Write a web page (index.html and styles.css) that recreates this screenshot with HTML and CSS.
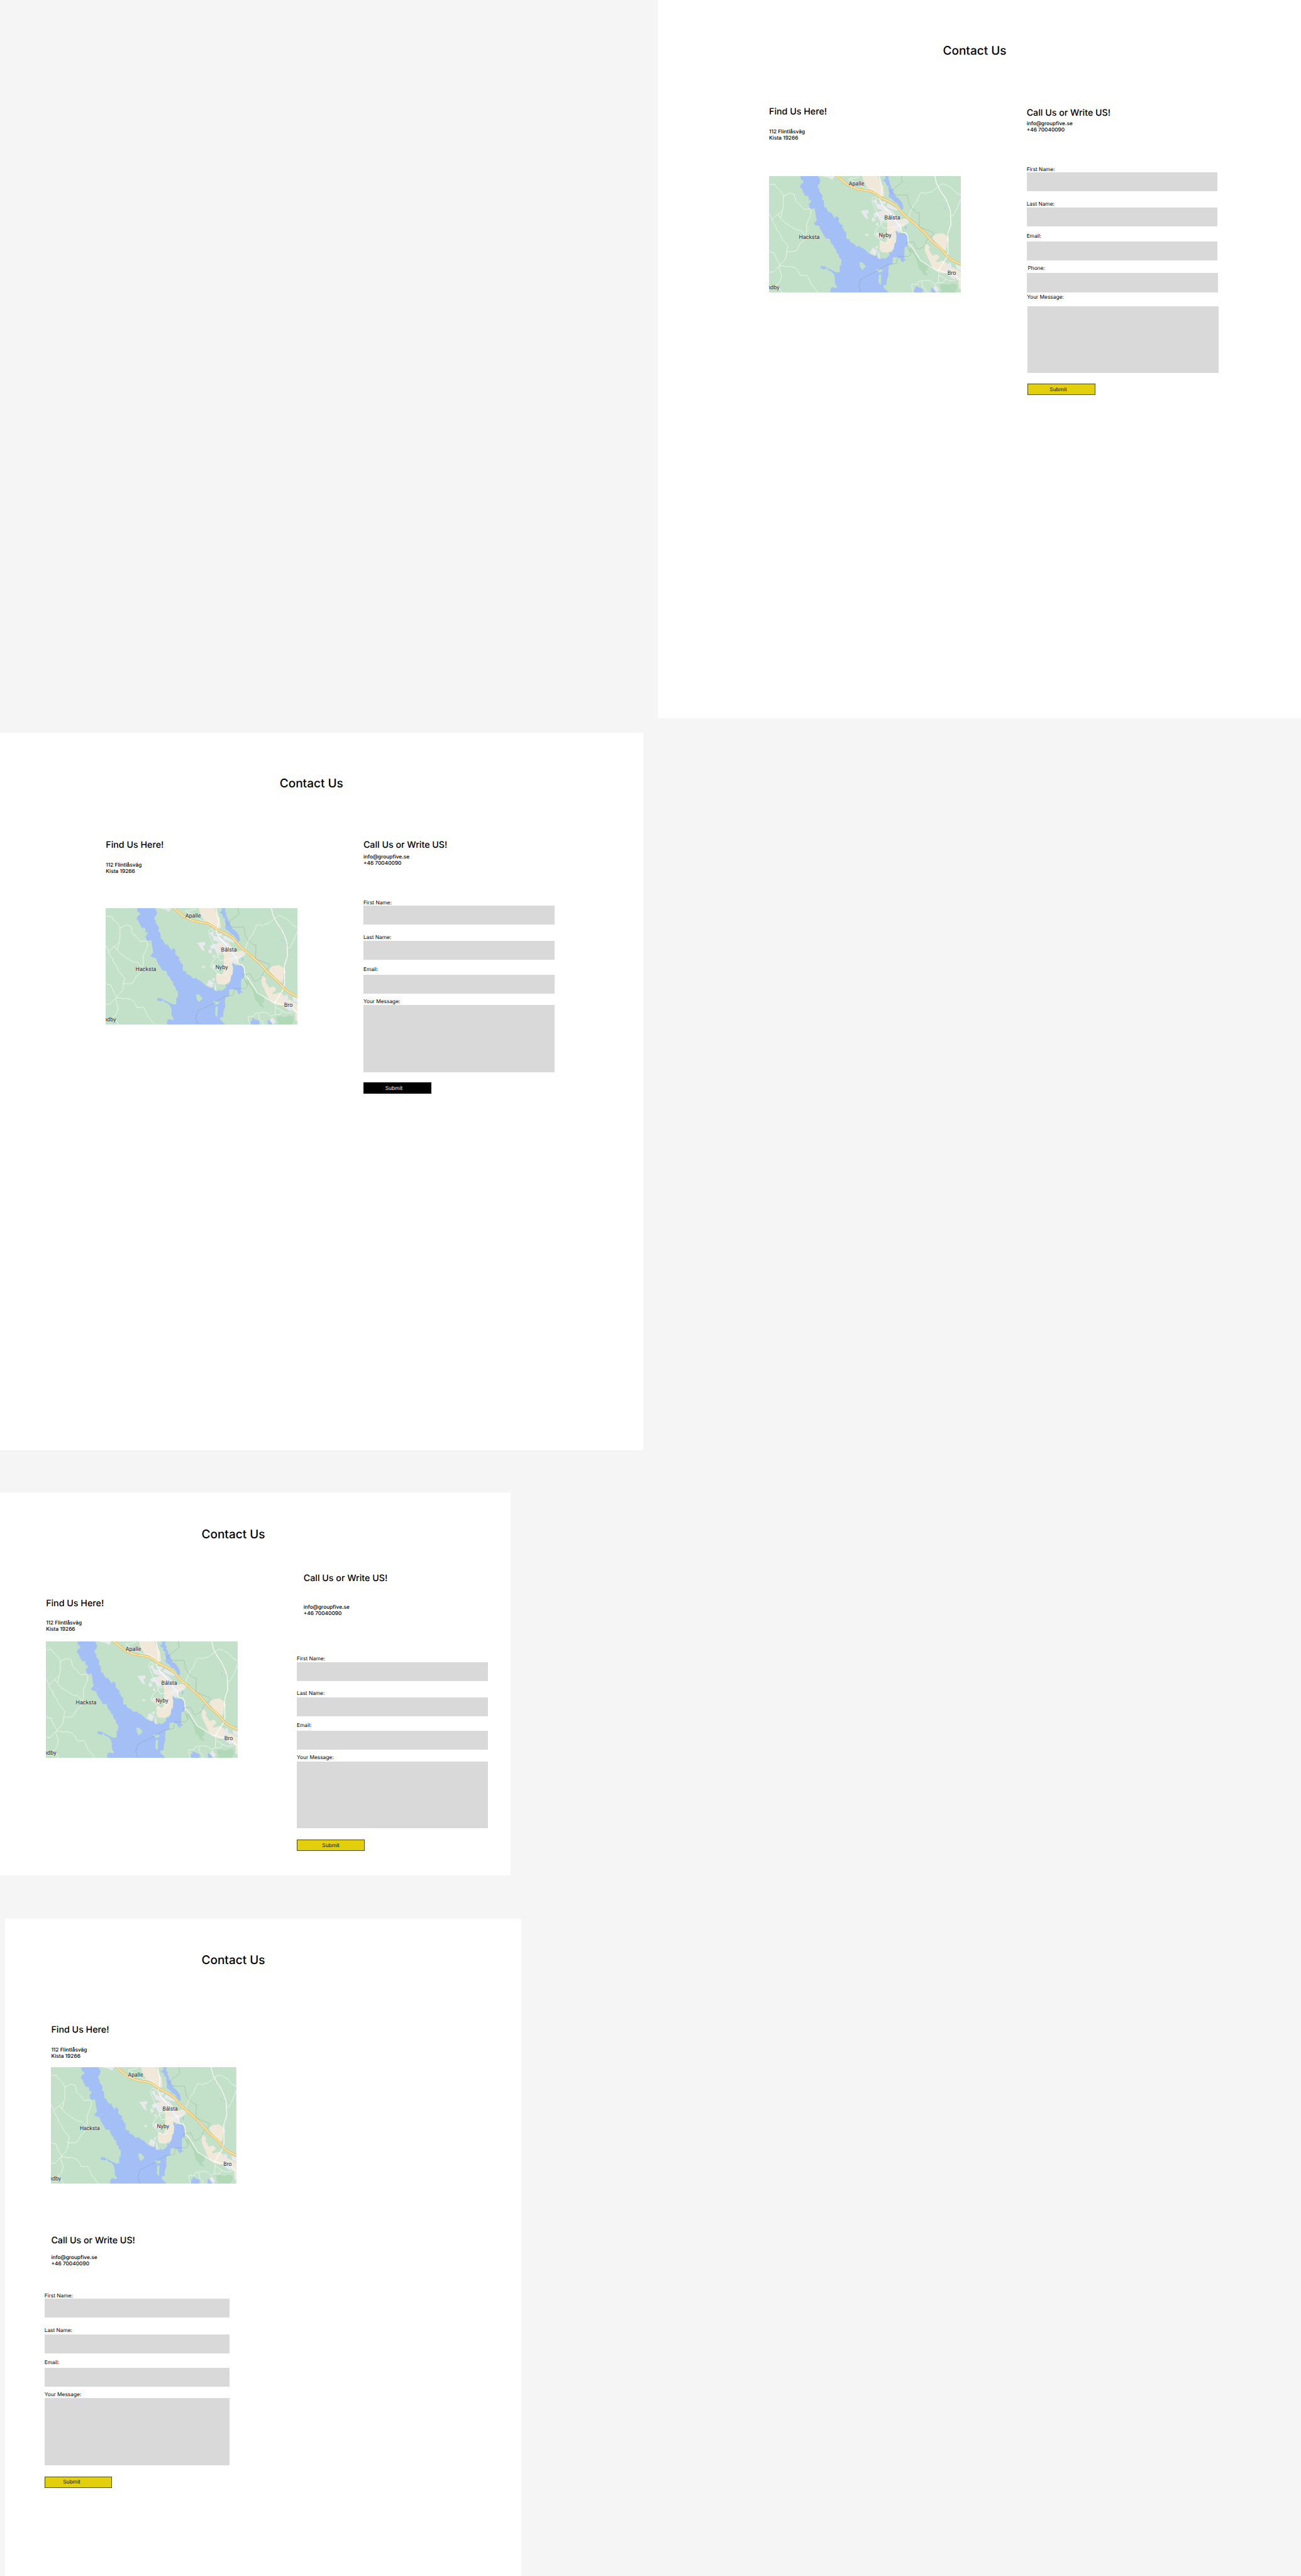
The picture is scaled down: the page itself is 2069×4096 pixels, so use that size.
FILE: index.html
```html
<!DOCTYPE html>
<html lang="en">
<head>
<meta charset="utf-8">
<title>Contact Us</title>
<link rel="stylesheet" href="styles.css">
</head>
<body>
<svg class="defs" aria-hidden="true">
  <symbol id="terrain" viewBox="49 31 1490 935" preserveAspectRatio="none">
    <rect class="land" x="49" y="31" width="1490" height="935"/>
    <path class="forest" d="M1135 612L1165 600 1180 645 1215 690 1250 720 1283 745 1280 785 1262 795 1285 828 1245 820 1238 795 1212 770 1195 700 1170 655 1140 635ZM1400 895L1440 905 1480 892 1512 905 1508 940 1490 966 1370 966 1395 950 1380 930 1378 900Z"/>
    <path class="urban" d="M773 31L893 31 915 80 935 110 944 188 915 200 880 190 868 155 815 125 785 85ZM918 308L1000 305 1035 350 1065 380 1110 370 1130 385 1125 405 1080 445 1060 480 1035 470 1040 510 1036 560 1022 590 1015 620 975 645 920 640 908 615 908 560 925 548 950 570 965 540 968 400 940 350 920 330ZM1325 510L1350 495 1400 487 1430 510 1450 543 1432 560 1430 600 1418 630 1385 610 1322 535ZM1258 580L1275 575 1297 600 1290 620 1320 670 1350 658 1373 675 1368 695 1345 710 1350 722 1400 708 1432 730 1436 765 1480 765 1539 800 1539 938 1524 930 1520 865 1440 810 1380 808 1340 785 1310 750 1285 690 1262 640Z"/>
    <path class="built" d="M455 31L556 31 542 60 510 42ZM855 230L883 214 888 250 935 262 1010 320 1012 350 1075 408 1072 480 1040 470 1020 420 985 350 935 305 885 290 882 265ZM895 235L955 233 950 262ZM960 258L982 250 1025 305 965 280ZM990 260L1055 300 1035 308 1000 280ZM760 310L820 302 823 328 805 332 822 375 800 370ZM858 335L885 320 918 315 945 370 948 392 920 395 895 350 872 365ZM846 372L860 358 878 385 855 398ZM875 418L897 402 898 432ZM793 508L808 490 828 510ZM873 502L888 478 935 505 925 537ZM833 645L855 605 890 630 872 668ZM870 605L897 587 890 618ZM896 622L908 660 906 697 896 695ZM1090 400L1120 378 1125 400 1085 420ZM1435 735L1460 725 1468 760 1450 795 1520 835 1485 858 1432 820ZM1500 740L1539 755 1539 790 1505 775ZM1342 904L1370 940 1350 966 1325 928Z"/>
    <path class="water" d="M292 31L298 60 316 70 314 88 300 92 288 118 302 130 312 155 330 190 355 190 358 225 376 220 374 238 358 258 366 285 380 298 388 290 404 290 410 330 412 350 420 385 397 413 410 425 440 432 446 455 455 472 473 500 490 530 522 535 530 570 550 590 555 610 570 618 576 650 590 660 597 690 611 700 609 748 598 750 598 803 570 803 520 778 480 755 452 752 450 772 480 779 497 768 510 788 535 797 555 822 560 845 562 890 578 920 572 930 545 920 528 930 524 966H980L960 945 938 925 940 905 962 905 965 860 978 820 975 790 980 745 1008 738 1010 685 1045 680 1070 695 1072 708 1090 725 1096 710 1117 706 1100 695 1102 602 1118 595 1127 565 1122 510 1105 492 1050 488 1045 475 1031 473 1040 510 1036 560 1024 575 1020 610 1013 625 1000 645 980 640 985 665 965 685 940 697 932 680 925 693 908 697 890 685 890 670 865 672 830 655 790 617 765 605 755 592 728 597 710 575 678 560 675 538 650 535 648 480 630 470 630 450 616 452 624 430 590 400 592 368 572 350 560 370 545 345 526 318 520 328 498 300 496 285 478 280 474 225 460 222 464 185 440 155 438 125 426 122 430 100 442 90 448 62 430 31ZM752 722L775 725 802 755 772 785 755 755ZM880 780L930 780 930 795 905 805ZM903 822L920 820 918 905 900 885ZM450 407H465V411H450Z" fill-rule="evenodd"/>
    <path class="water" d="M950 31L955 50 932 66 955 80 962 105 980 115 973 130 982 160 978 195 1010 220 1025 240 1045 248 1080 303 1093 290 1085 250 1065 220 1050 205 1035 198 1030 182 1015 170 1017 140 1000 135 998 110 985 90 988 70 975 60 978 31ZM1106 432H1117V450L1108 458ZM1173 966L1175 938 1186 935 1190 912 1215 925 1243 935V966ZM1308 925L1325 935 1350 966H1308ZM1412 283H1422V292H1414ZM1435 293L1448 310 1440 306Z"/>
    <path class="road" d="M49 97L97 97 103 118 125 135 160 180 161 215 160 275 140 366M161 192L208 167 245 177 257 233 290 262 317 299 368 293 376 307 370 350 342 412 341 480 325 520 320 550 287 578 265 625 243 637 186 638M152 307L72 378 49 328M118 337L140 370 180 410 262 462 302 470 325 505M72 378L78 400 104 440 108 460 130 488 150 535 198 595 187 630 183 682 165 712 134 742 105 690 88 645 62 645 49 628M134 742L135 752 120 758 82 802 49 802M135 752L160 750 180 758 215 755 255 768 275 790 292 828 346 828 380 905 395 920 432 966M125 760L147 830 135 875 105 910 130 930 149 966"/>
    <path class="road" d="M748 36L708 50 675 50 668 56 725 85 790 127 860 138 875 150 875 170M910 215L890 215 880 202 862 200 848 215 852 240 938 452 1020 438 1070 415M980 385L965 398 920 405 915 425 885 450 868 490 868 505 900 530 920 560 955 570 985 562 992 530 985 495 1005 462 1070 428 1128 410 1135 390 1137 345 1155 300 1170 265 1193 240 1222 168 1250 162 1264 173 1280 162 1310 157 1393 92 1425 100 1470 128 1505 168 1539 185M1539 215L1510 290 1480 348 1460 353M1368 800L1365 885 1332 898 1310 875 1275 866 1240 872 1210 875 1200 900 1158 900 1158 920 1173 966M1237 880L1242 920 1265 940 1273 966M1365 885L1403 886 1423 857 1400 842 1368 826M1423 857L1450 871 1485 871 1524 855"/>
    <path class="road road--main" d="M905 31L911 55 926 130 920 190 909 215 930 265 990 330 1050 415 1068 430 1080 480 1110 486 1125 510 1132 570 1158 597 1227 710 1360 793 1375 770 1425 690 1440 640 1438 490 1462 420 1458 310 1440 255 1415 200 1385 158 1350 90 1337 31M1365 793L1372 785 1412 805 1440 803 1500 830 1539 868"/>
    <path class="border" d="M1078 31L1080 60 1088 78 990 150 992 160 1042 184 1122 182 1135 250 1158 290 1195 322 1217 328 1214 438 1322 482 1326 497 1310 515 1275 545 1260 590 1210 620 1195 610 1172 557 1114 568 1130 605 1150 648 1150 660 1130 677 1050 675 1040 730 970 742 925 768 905 785 765 855 755 880 748 910 752 930 767 966"/>
    <path class="highway-edge" d="M575 27L635 80 668 105 738 136 843 153 870 168 920 205 1000 245 1030 265 1055 290 1100 345 1135 372 1255 482 1315 555 1380 610 1440 680 1468 703 1545 742"/>
    <path class="highway" d="M575 27L635 80 668 105 738 136 843 153 870 168 920 205 1000 245 1030 265 1055 290 1100 345 1135 372 1255 482 1315 555 1380 610 1440 680 1468 703 1545 742"/>
  </symbol>
</svg>

<main class="canvas">
  <section class="board board--phone-field">
    <h1 class="title">Contact Us</h1>
    <div class="columns">
      <div class="find">
        <h2 class="heading">Find Us Here!</h2>
        <p class="details">112 Flintlåsväg<br>Kista 19266</p>
        <svg class="map" viewBox="49 31 1490 935" preserveAspectRatio="none" role="img" aria-label="Map of Bålsta">
          <use href="#terrain" x="49" y="31" width="1490" height="935"/>
          <g class="places">
            <text x="668" y="108" textLength="121" lengthAdjust="spacingAndGlyphs">Apalle</text>
            <text x="946" y="378" textLength="122" lengthAdjust="spacingAndGlyphs">Bålsta</text>
            <text x="901" y="522" textLength="98" lengthAdjust="spacingAndGlyphs">Nyby</text>
            <text x="281" y="535" textLength="161" lengthAdjust="spacingAndGlyphs">Hacksta</text>
            <text x="1435" y="823" textLength="67" lengthAdjust="spacingAndGlyphs">Bro</text>
            <text x="34" y="938" textLength="96" lengthAdjust="spacingAndGlyphs">ndby</text>
          </g>
        </svg>
      </div>
      <div class="reach">
        <h2 class="heading">Call Us or Write US!</h2>
        <p class="details">info@groupfive.se<br>+46 70040090</p>
        <form class="form">
          <div class="row row--first"><label class="label">First Name:</label><div class="field"></div></div>
          <div class="row row--last"><label class="label">Last Name:</label><div class="field"></div></div>
          <div class="row row--email"><label class="label">Email:</label><div class="field"></div></div>
          <div class="row row--phone"><label class="label">Phone:</label><div class="field"></div></div>
          <div class="row row--message"><label class="label">Your Message:</label><div class="field field--area"></div></div>
          <button class="submit" type="button">Submit</button>
        </form>
      </div>
    </div>
  </section>

  <section class="board board--dark-button">
    <h1 class="title">Contact Us</h1>
    <div class="columns">
      <div class="find">
        <h2 class="heading">Find Us Here!</h2>
        <p class="details">112 Flintlåsväg<br>Kista 19266</p>
        <svg class="map" viewBox="49 31 1490 935" preserveAspectRatio="none" role="img" aria-label="Map of Bålsta">
          <use href="#terrain" x="49" y="31" width="1490" height="935"/>
          <g class="places">
            <text x="668" y="108" textLength="121" lengthAdjust="spacingAndGlyphs">Apalle</text>
            <text x="946" y="378" textLength="122" lengthAdjust="spacingAndGlyphs">Bålsta</text>
            <text x="901" y="522" textLength="98" lengthAdjust="spacingAndGlyphs">Nyby</text>
            <text x="281" y="535" textLength="161" lengthAdjust="spacingAndGlyphs">Hacksta</text>
            <text x="1435" y="823" textLength="67" lengthAdjust="spacingAndGlyphs">Bro</text>
            <text x="34" y="938" textLength="96" lengthAdjust="spacingAndGlyphs">ndby</text>
          </g>
        </svg>
      </div>
      <div class="reach">
        <h2 class="heading">Call Us or Write US!</h2>
        <p class="details">info@groupfive.se<br>+46 70040090</p>
        <form class="form">
          <div class="row row--first"><label class="label">First Name:</label><div class="field"></div></div>
          <div class="row row--last"><label class="label">Last Name:</label><div class="field"></div></div>
          <div class="row row--email"><label class="label">Email:</label><div class="field"></div></div>
          <div class="row row--message"><label class="label">Your Message:</label><div class="field field--area"></div></div>
          <button class="submit submit--dark" type="button">Submit</button>
        </form>
      </div>
    </div>
  </section>

  <section class="board board--laptop">
    <h1 class="title">Contact Us</h1>
    <div class="columns">
      <div class="find">
        <h2 class="heading">Find Us Here!</h2>
        <p class="details">112 Flintlåsväg<br>Kista 19266</p>
        <svg class="map" viewBox="49 31 1490 935" preserveAspectRatio="none" role="img" aria-label="Map of Bålsta">
          <use href="#terrain" x="49" y="31" width="1490" height="935"/>
          <g class="places">
            <text x="668" y="108" textLength="121" lengthAdjust="spacingAndGlyphs">Apalle</text>
            <text x="946" y="378" textLength="122" lengthAdjust="spacingAndGlyphs">Bålsta</text>
            <text x="901" y="522" textLength="98" lengthAdjust="spacingAndGlyphs">Nyby</text>
            <text x="281" y="535" textLength="161" lengthAdjust="spacingAndGlyphs">Hacksta</text>
            <text x="1435" y="823" textLength="67" lengthAdjust="spacingAndGlyphs">Bro</text>
            <text x="34" y="938" textLength="96" lengthAdjust="spacingAndGlyphs">ndby</text>
          </g>
        </svg>
      </div>
      <div class="reach">
        <h2 class="heading">Call Us or Write US!</h2>
        <p class="details">info@groupfive.se<br>+46 70040090</p>
        <form class="form">
          <div class="row row--first"><label class="label">First Name:</label><div class="field"></div></div>
          <div class="row row--last"><label class="label">Last Name:</label><div class="field"></div></div>
          <div class="row row--email"><label class="label">Email:</label><div class="field"></div></div>
          <div class="row row--message"><label class="label">Your Message:</label><div class="field field--area"></div></div>
          <button class="submit" type="button">Submit</button>
        </form>
      </div>
    </div>
  </section>

  <section class="board board--stacked">
    <h1 class="title">Contact Us</h1>
    <div class="columns">
      <div class="find">
        <h2 class="heading">Find Us Here!</h2>
        <p class="details">112 Flintlåsväg<br>Kista 19266</p>
        <svg class="map" viewBox="49 31 1490 935" preserveAspectRatio="none" role="img" aria-label="Map of Bålsta">
          <use href="#terrain" x="49" y="31" width="1490" height="935"/>
          <g class="places">
            <text x="668" y="108" textLength="121" lengthAdjust="spacingAndGlyphs">Apalle</text>
            <text x="946" y="378" textLength="122" lengthAdjust="spacingAndGlyphs">Bålsta</text>
            <text x="901" y="522" textLength="98" lengthAdjust="spacingAndGlyphs">Nyby</text>
            <text x="281" y="535" textLength="161" lengthAdjust="spacingAndGlyphs">Hacksta</text>
            <text x="1435" y="823" textLength="67" lengthAdjust="spacingAndGlyphs">Bro</text>
            <text x="34" y="938" textLength="96" lengthAdjust="spacingAndGlyphs">ndby</text>
          </g>
        </svg>
      </div>
      <div class="reach">
        <h2 class="heading">Call Us or Write US!</h2>
        <p class="details">info@groupfive.se<br>+46 70040090</p>
        <form class="form">
          <div class="row row--first"><label class="label">First Name:</label><div class="field"></div></div>
          <div class="row row--last"><label class="label">Last Name:</label><div class="field"></div></div>
          <div class="row row--email"><label class="label">Email:</label><div class="field"></div></div>
          <div class="row row--message"><label class="label">Your Message:</label><div class="field field--area"></div></div>
          <button class="submit" type="button">Submit</button>
        </form>
      </div>
    </div>
  </section>
</main>
</body>
</html>
```
FILE: styles.css
```css
/* 1rem is 100 design units, so 0.14rem is a 14-unit font */
html {
  font-size: 59.4555px;
}

*, *::before, *::after {
  box-sizing: border-box;
}

body {
  margin: 0;
  background: #f5f5f5;
  color: #000;
  font-family: Inter, "Liberation Sans", sans-serif;
  font-optical-sizing: none;
  text-rendering: geometricPrecision;
  overflow: hidden;
}

.defs {
  display: block;
  width: 0;
  height: 0;
}

.canvas {
  display: flex;
  flex-direction: column;
  align-items: flex-start;
  width: 34.8rem;
  height: 68.89rem;
  overflow: hidden;
}

.board {
  flex: none;
  background: #fff;
}

.columns {
  display: flex;
  align-items: flex-start;
}

.title, .heading, .details {
  margin: 0;
  font-weight: 500;
  white-space: nowrap;
}

.title {
  font-size: 0.32rem;
  line-height: 0.39rem;
}

.heading {
  height: 0.29rem;
  padding-top: 0.012rem;
  font-size: 0.24rem;
  line-height: 0.29rem;
}

.details {
  height: 0.34rem;
  padding-top: 0.012rem;
  font-size: 0.14rem;
  line-height: 0.17rem;
}

.find {
  width: 5.13rem;
}

.map {
  display: block;
  width: 100%;
  height: 3.117rem;
  overflow: hidden;
}

.reach {
  width: 5.11rem;
}

.row {
  display: flex;
  flex-direction: column;
}

.label {
  height: 0.165rem;
  padding-top: 0.012rem;
  font-size: 0.14rem;
  line-height: 0.17rem;
  white-space: nowrap;
}

.field {
  height: 0.506rem;
  background: #d9d9d9;
}

.field--area {
  height: 1.79rem;
}

.row--last { margin-top: 0.253rem; }
.row--last .field { margin-top: 0.022rem; }
.row--email { margin-top: 0.162rem; }
.row--email .field { margin-top: 0.07rem; }
.row--message { margin-top: 0.122rem; }
.row--message .field { margin-top: 0.02rem; }

.submit {
  display: block;
  width: 1.81rem;
  height: 0.303rem;
  margin: 0.285rem 0 0;
  padding: 0.022rem 0 0 0.57rem;
  border: 1px solid rgba(0, 0, 0, 0.65);
  border-radius: 0;
  background: #e3d00d;
  color: #000;
  font-family: inherit;
  font-size: 0.14rem;
  line-height: 0.17rem;
  text-align: left;
  text-rendering: inherit;
}

.submit--dark {
  border-color: #000;
  background: #000;
  color: #fff;
}

/* Wide board with the extra phone field */
.board--phone-field {
  width: 17.2rem;
  height: 19.2rem;
  margin-left: 17.6rem;
  padding-top: 1.155rem;
}
.board--phone-field .title { margin-left: 7.62rem; }
.board--phone-field .columns { margin: 1.285rem 0 0 2.97rem; gap: 1.76rem; }
.board--phone-field .find .details { margin-top: 0.31rem; }
.board--phone-field .map { margin-top: 0.933rem; }
.board--phone-field .reach { padding-top: 0.03rem; }
.board--phone-field .reach .details { margin-top: 0.07rem; }
.board--phone-field .form { margin-top: 0.885rem; }
.board--phone-field .row--phone { margin: 0.13rem -0.01rem 0 0.01rem; }
.board--phone-field .row--phone .label { margin-left: 0.02rem; }
.board--phone-field .row--phone .field { margin-top: 0.05rem; }
.board--phone-field .row--message { margin: 0.048rem -0.03rem 0 0.01rem; }
.board--phone-field .row--message .field { margin: 0.16rem 0 0 0.02rem; }
.board--phone-field .submit { margin-left: 0.03rem; }

/* Wide board with the black button */
.board--dark-button {
  width: 17.2rem;
  height: 19.2rem;
  margin-top: 0.39rem;
  padding-top: 1.17rem;
}
.board--dark-button .title { margin-left: 7.48rem; }
.board--dark-button .columns { margin: 1.29rem 0 0 2.83rem; gap: 1.76rem; }
.board--dark-button .find .details { margin-top: 0.31rem; }
.board--dark-button .map { margin-top: 0.903rem; }
.board--dark-button .reach .details { margin-top: 0.1rem; }
.board--dark-button .form { margin-top: 0.885rem; }

/* Laptop board */
.board--laptop {
  width: 13.66rem;
  height: 10.24rem;
  margin-top: 1.12rem;
  padding-top: 0.92rem;
}
.board--laptop .title { margin-left: 5.39rem; }
.board--laptop .columns { margin: 0.83rem 0 0 1.23rem; gap: 1.58rem; }
.board--laptop .find { padding-top: 0.68rem; }
.board--laptop .find .details { margin-top: 0.3rem; }
.board--laptop .map { margin-top: 0.238rem; }
.board--laptop .reach .heading { margin-left: 0.18rem; }
.board--laptop .reach .details { margin: 0.547rem 0 0 0.18rem; }
.board--laptop .form { margin-top: 1.055rem; }
.board--laptop .submit { margin-top: 0.305rem; padding-left: 0.66rem; }

/* Narrow board, one column */
.board--stacked {
  width: 13.8rem;
  height: 17.58rem;
  margin: 1.16rem 0 0 0.14rem;
  padding-top: 0.91rem;
}
.board--stacked .title { margin-left: 5.25rem; }
.board--stacked .columns { flex-direction: column; margin: 1.52rem 0 0 1.05rem; gap: 1.365rem; }
.board--stacked .find { width: 4.96rem; margin-left: 0.18rem; }
.board--stacked .find .details { margin-top: 0.31rem; }
.board--stacked .map { margin-top: 0.22rem; }
.board--stacked .reach { width: 4.95rem; }
.board--stacked .reach .heading { margin-left: 0.18rem; }
.board--stacked .reach .details { margin: 0.226rem 0 0 0.18rem; }
.board--stacked .form { margin-top: 0.69rem; }
.board--stacked .submit { margin-top: 0.3rem; padding-left: 0.48rem; }

/* Map */
.land { fill: #c3e1c9; }
.forest { fill: #b1d9b8; }
.urban { fill: #f0e8d9; }
.built { fill: #e8e9ed; }
.water { fill: #a3bff5; }

.road, .border, .highway, .highway-edge {
  fill: none;
  stroke-linejoin: round;
}
.road { stroke: #fff; stroke-width: 3.5; stroke-opacity: 0.9; }
.road--main { stroke-width: 6; stroke-opacity: 1; }
.border { stroke: #7d8f8b; stroke-width: 3; stroke-dasharray: 8 6; }
.highway-edge { stroke: #efb440; stroke-width: 17; }
.highway { stroke: #ffeabb; stroke-width: 9; }

.places text {
  fill: #24272b;
  font-family: Roboto, "Liberation Sans", sans-serif;
  font-size: 46px;
  font-weight: 400;
  stroke: #fff;
  stroke-opacity: 0.6;
  stroke-width: 5;
  stroke-linejoin: round;
  paint-order: stroke;
}
```
